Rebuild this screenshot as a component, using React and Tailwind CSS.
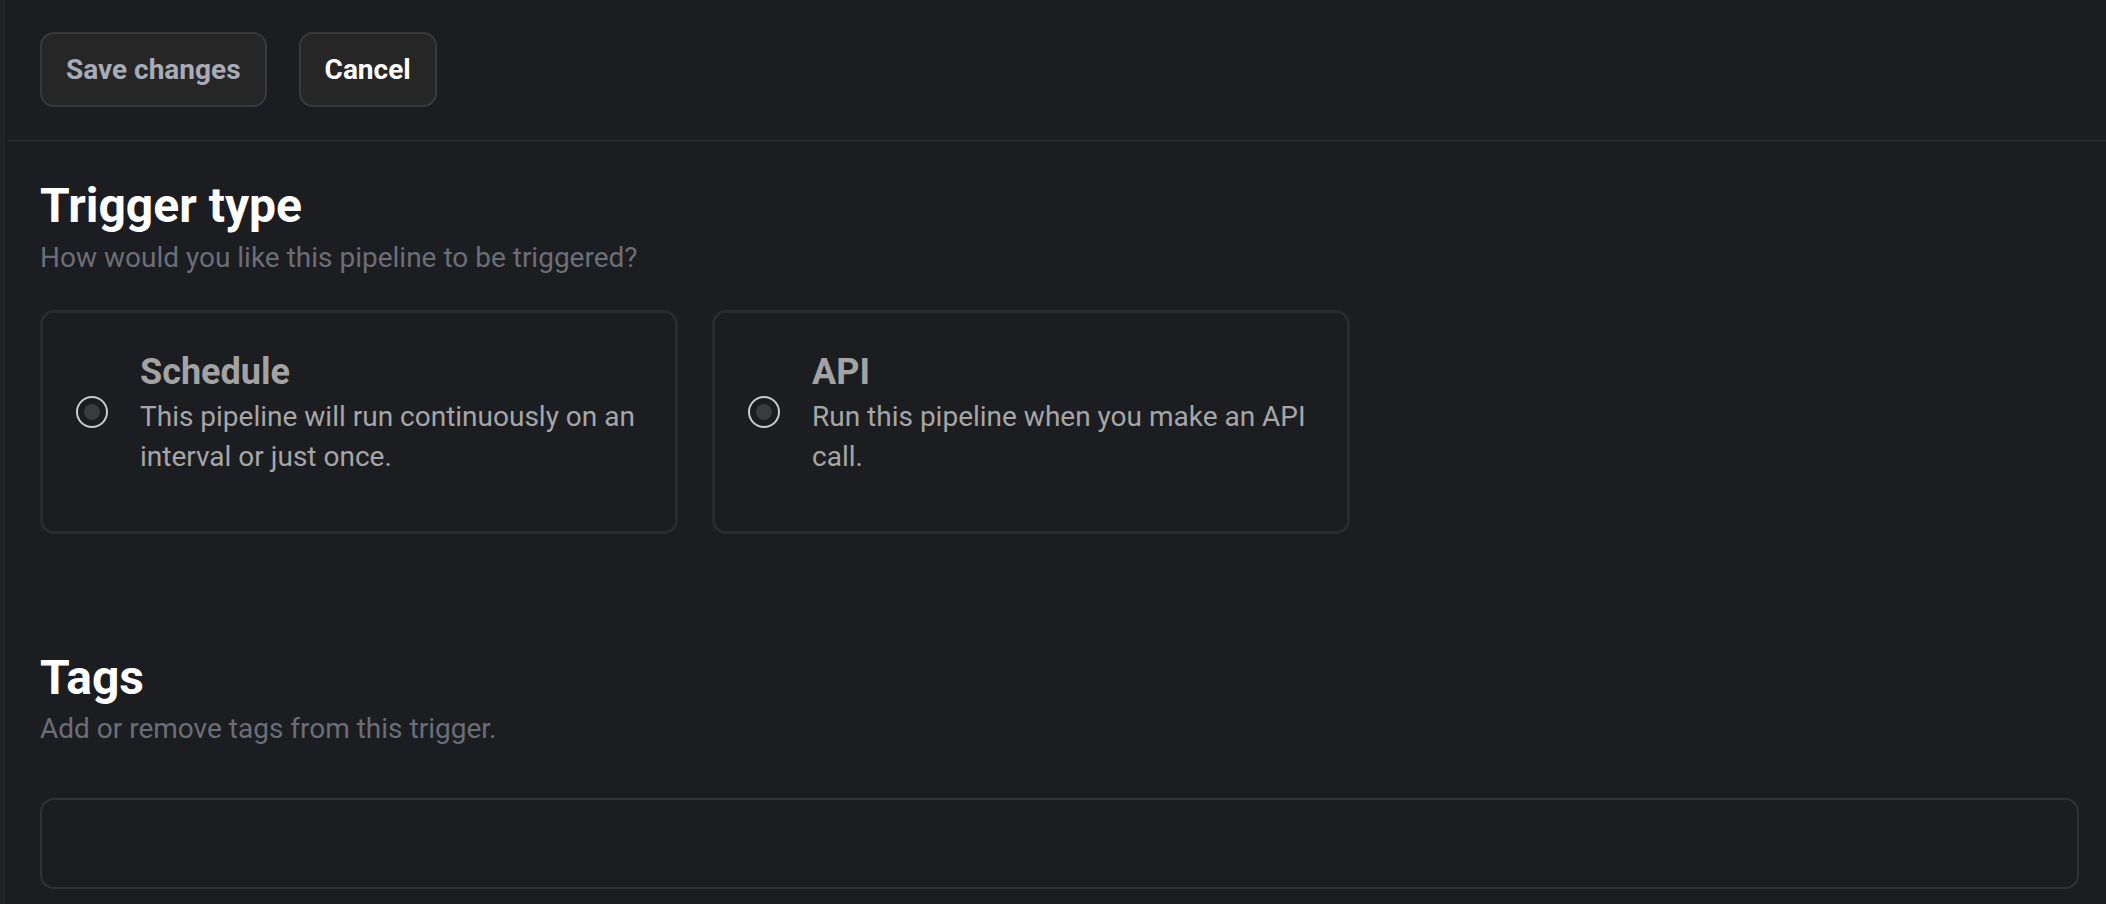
import React from "react";

function Radio() {
  return (
    <div className="w-[32px] h-[32px] shrink-0 rounded-full border-2 border-[#cbcbce] flex items-center justify-center">
      <div className="w-[16px] h-[16px] rounded-full bg-[#3a3b40]" />
    </div>
  );
}

function OptionCard({ title, desc }) {
  return (
    <div className="w-[638px] h-[224px] rounded-[14px] border-[3px] border-[#2a2b2f] bg-[#1c1d21] flex items-start pl-[33px] pr-[30px] pt-[34px]">
      <div className="flex items-center gap-[32px] w-full">
        <Radio />
        <div className="flex flex-col">
          <div className="text-[36px] leading-[50px] font-bold text-[#a3a3a3]">{title}</div>
          <div className="text-[28px] leading-[40px] text-[#a6a6a6]">{desc}</div>
        </div>
      </div>
    </div>
  );
}

export default function App() {
  return (
    <div
      className="w-[2106px] h-[904px] bg-[#1c1d21] flex overflow-hidden"
      style={{ fontFamily: "Roboto, 'Noto Sans', sans-serif" }}
    >
      <div className="w-[7px] shrink-0 bg-[#212226] border-r border-[#17181b]" />
      <div className="flex-1 flex flex-col min-w-0">
        <div className="flex gap-[32px] pl-[33px] pt-[32px] pb-[33px] border-b border-[#2c2d31]">
          <button className="h-[75px] px-[24px] rounded-[14px] border-2 border-[#38393b] bg-[#262627] text-[28px] font-bold text-[#a8acb7]">
            Save changes
          </button>
          <button className="h-[75px] px-[24px] rounded-[14px] border-2 border-[#38393b] bg-[#262627] text-[28px] font-bold text-white">
            Cancel
          </button>
        </div>
        <div className="pl-[33px] pr-[27px] flex flex-col">
          <h2 className="mt-[36px] text-[48px] leading-[57.6px] font-bold text-white">Trigger type</h2>
          <p className="mt-[3px] text-[28px] leading-[40px] text-[#6c6e77]">
            How would you like this pipeline to be triggered?
          </p>
          <div className="mt-[32px] flex gap-[34px]">
            <OptionCard
              title="Schedule"
              desc="This pipeline will run continuously on an interval or just once."
            />
            <OptionCard
              title="API"
              desc="Run this pipeline when you make an API call."
            />
          </div>
          <h2 className="mt-[115px] text-[48px] leading-[57.6px] font-bold text-white">Tags</h2>
          <p className="mt-[3px] text-[28px] leading-[40px] text-[#6c6e77]">
            Add or remove tags from this trigger.
          </p>
          <div className="mt-[49px] h-[91px] rounded-[14px] border-2 border-[#313237] bg-[#1c1d21]" />
        </div>
      </div>
    </div>
  );
}
